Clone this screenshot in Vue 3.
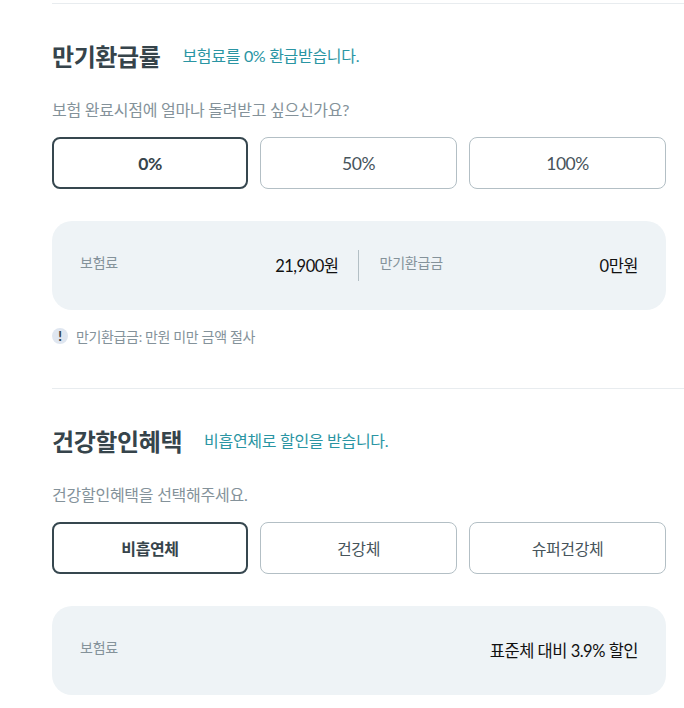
<script setup>
const sections = [
  {
    title: '만기환급률',
    desc: '보험료를 0% 환급받습니다.',
    question: '보험 완료시점에 얼마나 돌려받고 싶으신가요?',
    options: ['0%', '50%', '100%'],
    numeric: true,
    rows: [
      { label: '보험료', value: '21,900원' },
      { label: '만기환급금', value: '0만원' },
    ],
    note: '만기환급금: 만원 미만 금액 절사',
  },
  {
    title: '건강할인혜택',
    desc: '비흡연체로 할인을 받습니다.',
    question: '건강할인혜택을 선택해주세요.',
    options: ['비흡연체', '건강체', '슈퍼건강체'],
    rows: [{ label: '보험료', value: '표준체 대비 3.9% 할인' }],
  },
]
</script>

<template>
  <div class="page">
    <section v-for="s in sections" :key="s.title" class="section">
      <div class="head">
        <h2>{{ s.title }}</h2>
        <span class="desc">{{ s.desc }}</span>
      </div>
      <p class="question">{{ s.question }}</p>
      <div class="options">
        <button
          v-for="(opt, i) in s.options"
          :key="opt"
          class="option"
          :class="{ active: i === 0, numeric: s.numeric }"
        >
          {{ opt }}
        </button>
      </div>
      <div class="panel">
        <div v-for="row in s.rows" :key="row.label" class="row">
          <span class="label">{{ row.label }}</span>
          <span class="value">{{ row.value }}</span>
        </div>
      </div>
      <div v-if="s.note" class="note">
        <span class="mark">!</span>
        {{ s.note }}
      </div>
    </section>
  </div>
</template>

<style>
html, body {
  background: #fff;
}
</style>

<style scoped>
.page {
  padding: 3px 0 0 52px;
  font-family: Lato, "Noto Sans CJK KR", sans-serif;
}
.section {
  border-top: 1px solid #e8ecef;
  padding-top: 33px;
  height: 351px;
}
.section:last-child {
  height: auto;
}
.head {
  display: flex;
  align-items: center;
  gap: 22px;
  height: 36px;
}
h2 {
  margin: 0;
  font-size: 24px;
  font-weight: 700;
  letter-spacing: -0.4px;
  color: #36444b;
}
.desc {
  font-size: 16px;
  letter-spacing: -0.3px;
  color: #2a95a3;
}
.question {
  margin: 24px 0 0;
  font-size: 16px;
  line-height: 26px;
  letter-spacing: -0.25px;
  color: #84929a;
}
.options {
  display: grid;
  grid-template-columns: 196px 197px 197px;
  gap: 12px;
  margin-top: 14px;
}
.option {
  height: 52px;
  padding: 0;
  box-sizing: border-box;
  background: #fff;
  border: 1px solid #b3bfc5;
  border-radius: 8px;
  font-family: inherit;
  font-size: 16px;
  letter-spacing: -0.4px;
  color: #47545b;
}
.option.numeric {
  font-size: 17.5px;
  letter-spacing: -0.5px;
}
.option.active {
  border: 2px solid #36474f;
  font-weight: 700;
  color: #36444b;
}
.panel {
  display: flex;
  align-items: center;
  width: 614px;
  height: 89px;
  margin-top: 32px;
  box-sizing: border-box;
  padding: 0 28px;
  background: #eef3f6;
  border-radius: 20px;
}
.row {
  flex: 1;
  display: flex;
  justify-content: space-between;
  align-items: center;
}
.row + .row {
  margin-left: 19px;
  padding-left: 21px;
  height: 31px;
  border-left: 1px solid #b3bfc5;
}
.label {
  position: relative;
  top: -4px;
  font-size: 14px;
  letter-spacing: -0.2px;
  color: #84929a;
}
.value {
  position: relative;
  top: -1px;
  font-size: 16.5px;
  letter-spacing: -0.5px;
  color: #111;
}
.note {
  display: flex;
  align-items: center;
  gap: 8px;
  margin-top: 16px;
  font-size: 14px;
  letter-spacing: -0.35px;
  color: #84929a;
}
.mark {
  width: 16px;
  height: 16px;
  border-radius: 50%;
  background: #dfe6f0;
  color: #36444b;
  font-size: 13px;
  font-weight: 900;
  line-height: 16px;
  text-align: center;
}
</style>
